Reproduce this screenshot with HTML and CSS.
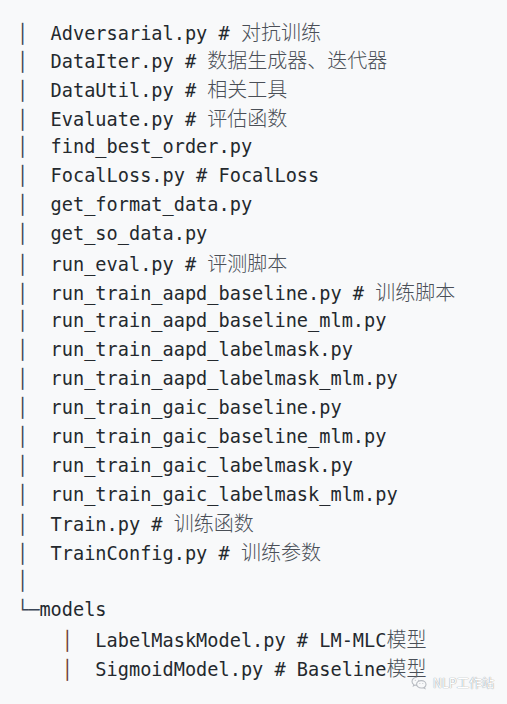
FILE: index.html
```html
<!DOCTYPE html>
<html lang="zh-CN">
<head>
<meta charset="utf-8">
<link rel="stylesheet" href="styles.css">
</head>
<body>
<div class="code">
<div class="ln"><span class="bar">│</span>  Adversarial.py # <span class="zh">对抗训练</span></div>
<div class="ln"><span class="bar">│</span>  DataIter.py # <span class="zh">数据生成器、迭代器</span></div>
<div class="ln"><span class="bar">│</span>  DataUtil.py # <span class="zh">相关工具</span></div>
<div class="ln"><span class="bar">│</span>  Evaluate.py # <span class="zh">评估函数</span></div>
<div class="ln"><span class="bar">│</span>  find_best_order.py</div>
<div class="ln"><span class="bar">│</span>  FocalLoss.py # FocalLoss</div>
<div class="ln"><span class="bar">│</span>  get_format_data.py</div>
<div class="ln"><span class="bar">│</span>  get_so_data.py</div>
<div class="ln"><span class="bar">│</span>  run_eval.py # <span class="zh">评测脚本</span></div>
<div class="ln"><span class="bar">│</span>  run_train_aapd_baseline.py # <span class="zh">训练脚本</span></div>
<div class="ln"><span class="bar">│</span>  run_train_aapd_baseline_mlm.py</div>
<div class="ln"><span class="bar">│</span>  run_train_aapd_labelmask.py</div>
<div class="ln"><span class="bar">│</span>  run_train_aapd_labelmask_mlm.py</div>
<div class="ln"><span class="bar">│</span>  run_train_gaic_baseline.py</div>
<div class="ln"><span class="bar">│</span>  run_train_gaic_baseline_mlm.py</div>
<div class="ln"><span class="bar">│</span>  run_train_gaic_labelmask.py</div>
<div class="ln"><span class="bar">│</span>  run_train_gaic_labelmask_mlm.py</div>
<div class="ln"><span class="bar">│</span>  Train.py # <span class="zh">训练函数</span></div>
<div class="ln"><span class="bar">│</span>  TrainConfig.py # <span class="zh">训练参数</span></div>
<div class="ln"><span class="bar">│</span></div>
<div class="ln"><span class="corner">└─</span>models</div>
<div class="ln">    <span class="bar bar-sub">│</span>  LabelMaskModel.py # LM-MLC<span class="zh">模型</span></div>
<div class="ln">    <span class="bar bar-sub">│</span>  SigmoidModel.py # Baseline<span class="zh">模型</span></div>
</div>
<div class="mark">
<svg class="mark-icon" width="16" height="14" viewBox="0 0 16 14" fill="none" stroke="#b8bcc2" stroke-width="1.1">
<path d="M6.2 1.2C3.3 1.2 1 3.1 1 5.4c0 1.3 0.7 2.4 1.8 3.2L2.4 10l1.7-0.9c0.6 0.2 1.3 0.3 2 0.3"/>
<path d="M10.3 4.6c2.6 0 4.7 1.7 4.7 3.8 0 1.1-0.6 2.1-1.5 2.8l0.4 1.3-1.6-0.8c-0.6 0.2-1.3 0.3-2 0.3-2.6 0-4.7-1.7-4.7-3.8s2.1-3.6 4.7-3.6z"/>
<circle cx="4.3" cy="4.3" r="0.55" fill="#b8bcc2" stroke="none"/>
<circle cx="7.6" cy="4.3" r="0.55" fill="#b8bcc2" stroke="none"/>
<circle cx="8.9" cy="7.6" r="0.5" fill="#b8bcc2" stroke="none"/>
<circle cx="11.8" cy="7.6" r="0.5" fill="#b8bcc2" stroke="none"/>
</svg>
<span class="mark-text">NLP工作站</span>
</div>
</body>
</html>
```
FILE: styles.css
```css
html, body {
  margin: 0;
  padding: 0;
  background: #f8f9fa;
}
body {
  width: 507px;
  height: 704px;
  overflow: hidden;
  position: relative;
}
.code {
  padding: 17.5px 0 0 17px;
  font-family: "DejaVu Sans Mono", "Noto Sans CJK SC", monospace;
  font-size: 18.6px;
  color: #24292e;
}
.ln {
  white-space: pre;
  height: 28.95px;
  line-height: 28.95px;
}
.zh {
  font-family: "Noto Sans CJK SC", sans-serif;
  font-size: 20px;
  color: #4a4f57;
  font-weight: 300;
}
.bar {
  color: #3b4656;
}
.bar-sub {
  color: #6e3b32;
}
.corner {
  color: #3b4656;
}
.mark {
  position: absolute;
  left: 411px;
  top: 676px;
  display: flex;
  align-items: center;
  gap: 6px;
  white-space: nowrap;
}
.mark-text {
  font-family: "Noto Sans CJK SC", sans-serif;
  font-size: 12.5px;
  line-height: 14px;
  color: #ffffff;
  text-shadow: 0 0 1px #9aa0a6, 0 0 1px #9aa0a6;
}
```
